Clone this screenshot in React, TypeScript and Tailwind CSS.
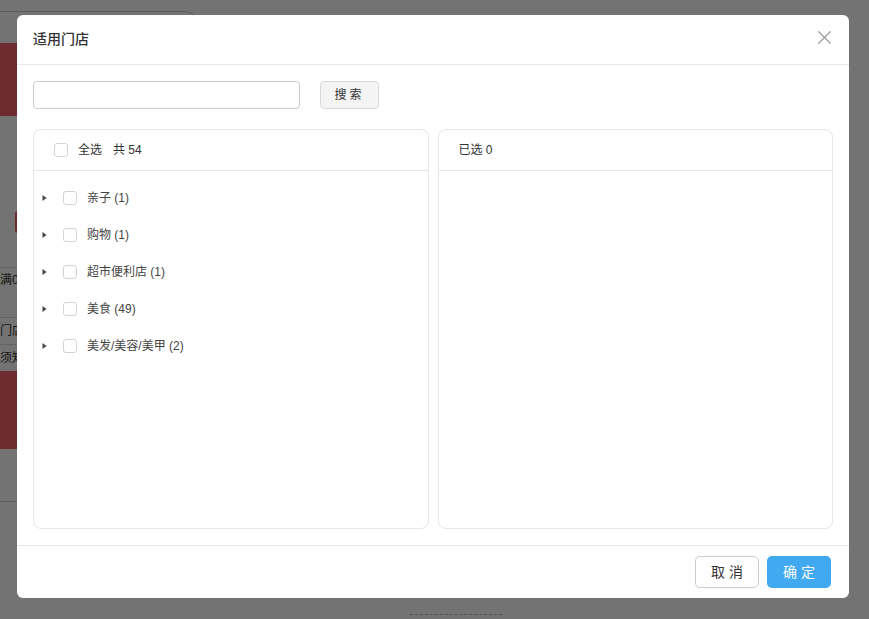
import { X } from "lucide-react";

const STORE_GROUPS = [
  { name: "亲子", count: 1 },
  { name: "购物", count: 1 },
  { name: "超市便利店", count: 1 },
  { name: "美食", count: 49 },
  { name: "美发/美容/美甲", count: 2 },
];

const FONT = { fontFamily: '"Liberation Sans", Arial, "Noto Sans CJK SC", sans-serif' };

function Checkbox() {
  return <span className="block w-[14px] h-[14px] shrink-0 rounded-[3px] border border-[#d4d4d4] bg-white" />;
}

function Caret() {
  return (
    <svg width="5" height="8" viewBox="0 0 5 8" className="shrink-0">
      <path d="M0.5 1 L4.5 4 L0.5 7 Z" fill="#444" />
    </svg>
  );
}

// page sitting behind the dialog, mostly hidden by the mask
function BackgroundPage() {
  return (
    <div className="w-[260px] pt-[11px] text-[12px] text-[#333]">
      <div className="h-[20px] w-[196px] rounded-tr-[10px] border-t border-r border-[#cfcfcf]" />
      <div className="mt-[12px] h-[73px] bg-[#f25f6b]" />
      <div className="mt-[95px] ml-[15px] h-[22px] w-[60px] rounded-[3px] bg-[#f25f6b]" />
      <div className="mt-[34px] border-t border-[#ddd] pt-[3px] h-[50px] leading-[18px]">
        <span className="ml-[-12px]">订满0元</span>
      </div>
      <div className="border-t border-[#ddd] h-[27px] leading-[26px]">
        <span className="ml-[-24px]">适用门店</span>
      </div>
      <div className="border-t border-[#ddd] h-[27px] leading-[26px]">
        <span className="ml-[-24px]">购买须知</span>
      </div>
      <div className="h-[78px] bg-[#f25f6b]" />
      <div className="h-[52px]" />
      <div className="border-t border-[#cfcfcf]" />
    </div>
  );
}

export default function App() {
  return (
    <div className="relative w-[869px] h-[619px] overflow-hidden bg-white" style={FONT}>
      <BackgroundPage />
      <div className="absolute left-[410px] top-[614px] w-[92px] border-t border-dashed border-[#bbb]" />

      {/* mask */}
      <div className="absolute inset-0 bg-black/55" />

      {/* dialog */}
      <div className="absolute left-[17px] top-[15px] w-[832px] h-[583px] rounded-[6px] bg-white flex flex-col">
        <div className="h-[50px] shrink-0 flex items-center justify-between pl-4 pr-[13px] border-b border-[#e8e8e8]">
          <h2 className="text-[14px] font-medium text-[#333]">适用门店</h2>
          <X size={23} strokeWidth={1.25} className="text-[#999] mb-[4px]" />
        </div>

        <div className="flex-1 flex flex-col px-4 pt-4 pb-4 min-h-0">
          <div className="flex items-center h-[28px]">
            <input className="w-[267px] h-[28px] rounded-[4px] border border-[#ccc] px-2 text-[12px] outline-none" />
            <button className="ml-[20px] w-[59px] h-[28px] rounded-[4px] border border-[#d9d9d9] bg-[#f4f4f4] text-[12px] text-[#333] tracking-[3px]">
              搜索
            </button>
          </div>

          <div className="mt-[20px] flex-1 grid grid-cols-2 gap-[9px] min-h-0">
            <div className="rounded-[8px] border border-[#e6e6e6] flex flex-col">
              <div className="h-[41px] shrink-0 flex items-center pl-[20px] border-b border-[#e6e6e6] text-[12px] text-[#333]">
                <Checkbox />
                <span className="ml-[10px]">全选</span>
                <span className="ml-[11px]">共 54</span>
              </div>
              <div className="pt-[8px]">
                {STORE_GROUPS.map((g) => (
                  <div key={g.name} className="h-[37px] flex items-center pl-[8px] text-[12px] text-[#444]">
                    <Caret />
                    <span className="ml-[16px]">
                      <Checkbox />
                    </span>
                    <span className="ml-[10px]">
                      {g.name} ({g.count})
                    </span>
                  </div>
                ))}
              </div>
            </div>

            <div className="rounded-[8px] border border-[#e6e6e6] flex flex-col">
              <div className="h-[41px] shrink-0 flex items-center pl-[20px] border-b border-[#e6e6e6] text-[12px] text-[#333]">
                已选 0
              </div>
            </div>
          </div>
        </div>

        <div className="h-[53px] shrink-0 border-t border-[#e8e8e8] flex items-center justify-end gap-2 pr-[18px]">
          <button className="w-[64px] h-[32px] rounded-[5px] border border-[#ccc] bg-white text-[14px] text-[#333] tracking-[4px] pl-[4px]">
            取消
          </button>
          <button className="w-[64px] h-[32px] rounded-[5px] bg-[#40a9f0] text-[14px] text-white tracking-[4px] pl-[4px]">
            确定
          </button>
        </div>
      </div>
    </div>
  );
}
